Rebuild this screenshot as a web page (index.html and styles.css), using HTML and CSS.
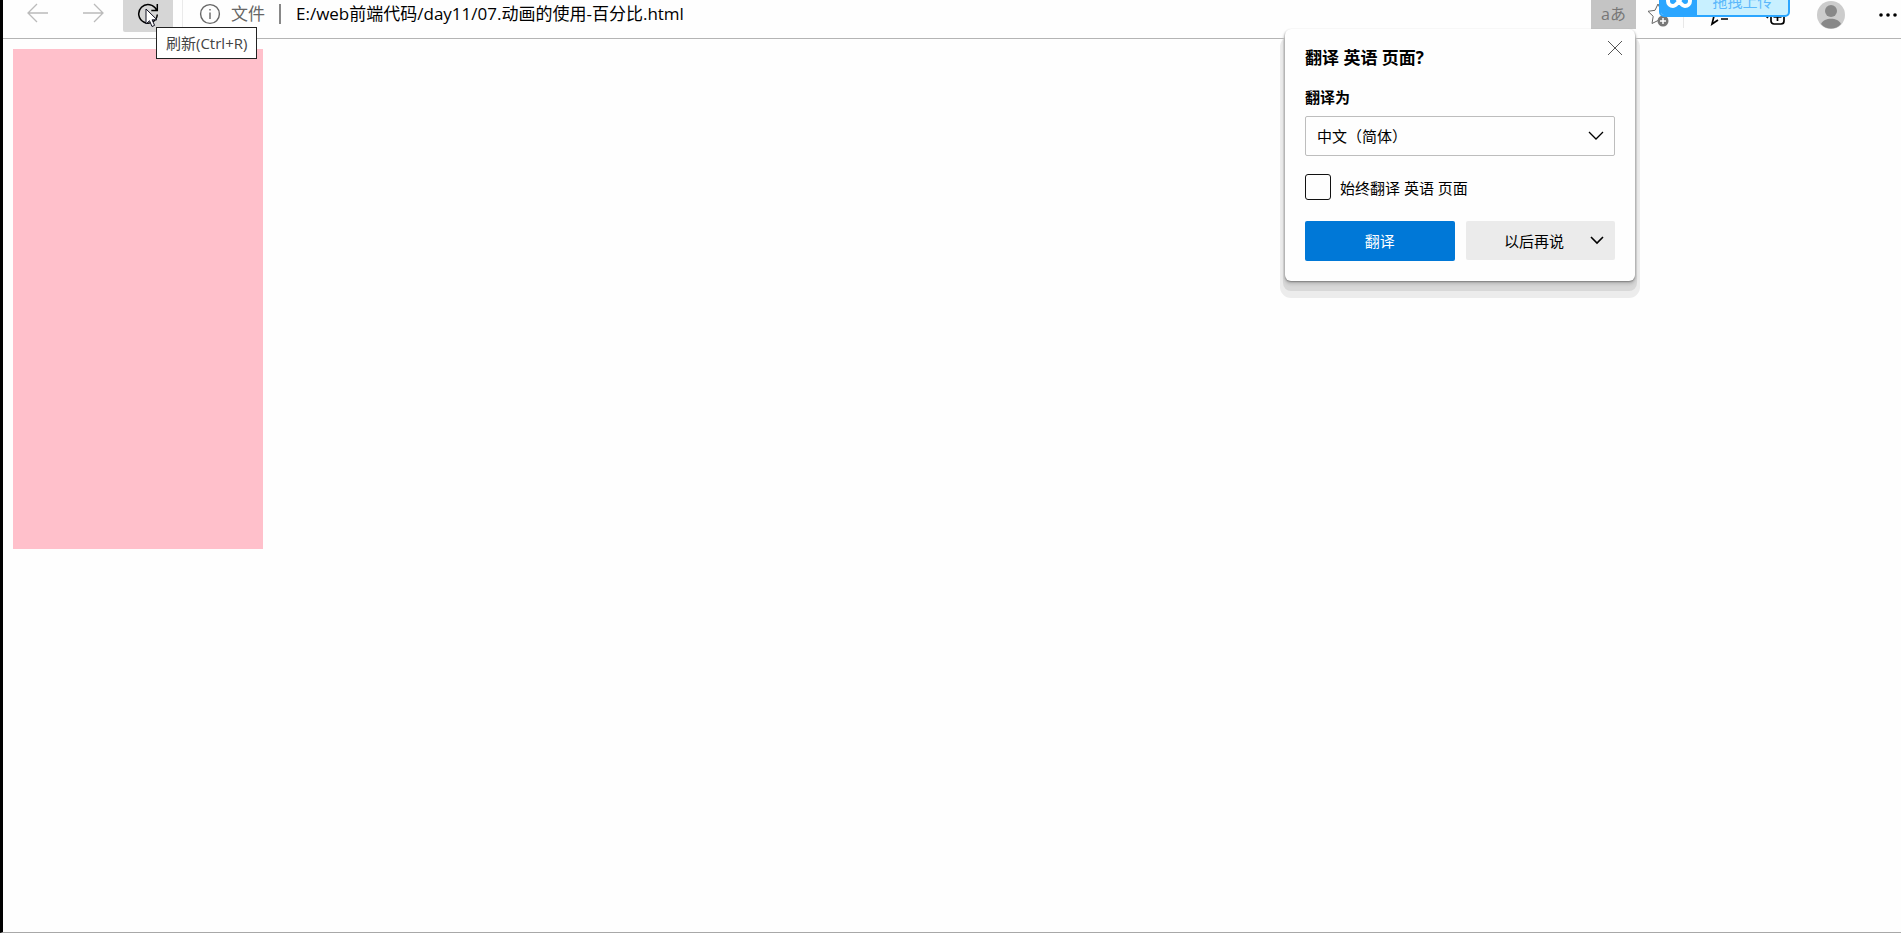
FILE: index.html
```html
<!DOCTYPE html>
<html lang="zh-CN">
<head>
<meta charset="utf-8">
<title>07.动画的使用-百分比.html</title>
<link rel="stylesheet" href="styles.css">
</head>
<body>
<div class="window">
  <header class="toolbar">
    <nav class="nav">
      <button class="nav-btn" type="button" disabled aria-label="后退"><svg width="22" height="22" viewBox="0 0 22 22"><path d="M21 11H1M10 2l-9 9 9 9"/></svg></button>
      <button class="nav-btn" type="button" disabled aria-label="前进"><svg width="22" height="22" viewBox="0 0 22 22"><path d="M0 11h20M11 2l9 9-9 9"/></svg></button>
      <button class="refresh" type="button" aria-label="刷新">
        <svg width="22" height="22" viewBox="0 0 22 22"><path d="M19.500 7A9.300 9.300 0 1 0 20.300 11.500M20.300 1v6.500h-6"/></svg>
      </button>
      <svg class="cursor" width="13" height="20" viewBox="0 0 13 20"><path d="M1 1v15l3.500-3.300L7 18.500l2.600-1.100-2.500-5.600H12z"/></svg>
      <span class="tooltip" role="tooltip">刷新(Ctrl+R)</span>
    </nav>
    <div class="address">
      <svg class="info" width="22" height="22" viewBox="0 0 22 22"><circle cx="11" cy="11" r="9.400"/><path d="M11 9.500V16M11 6v1.600"/></svg>
      <span class="scheme">文件</span>
      <span class="bar"></span>
      <span class="url">E:/web前端代码/day11/07.动画的使用-百分比.html</span>
    </div>
    <div class="actions">
      <button class="translate-btn" type="button" aria-label="翻译">aあ</button>
      <button class="action star" type="button" aria-label="收藏"><svg width="24" height="24" viewBox="0 0 24 24"><path d="M11 1l3 6.300 7 1-4 4M11 1L8 7.300l-7 1 5.200 5L5 20.500l6-3"/><circle cx="16" cy="18" r="5.500"/><path class="plus" d="M16 15v6M13 18h6"/></svg></button>
      <span class="divider"></span>
      <button class="action fav" type="button" aria-label="收藏夹"><svg width="24" height="24" viewBox="0 0 24 24"><path d="M11 3l3 6h7M4 9h5l2-6M3 9l3 4-2 8 6-4M13 16h7"/></svg></button>
      <button class="action coll" type="button" aria-label="集锦"><svg width="24" height="24" viewBox="0 0 24 24"><rect x="8" y="7" width="13" height="14" rx="3"/><path d="M5 15l-3-3V5a2 2 0 0 1 2-2h11M10.500 14h8M14.500 10v8"/></svg></button>
      <button class="action avatar" type="button" aria-label="用户"><svg width="28" height="28" viewBox="0 0 28 28"><circle class="disc" cx="14" cy="14" r="14"/><circle class="person" cx="14" cy="10" r="6"/><path class="person" d="M4 23c3-7 17-7 20 0-5 6-15 6-20 0z"/></svg></button>
      <button class="action more" type="button" aria-label="更多"><svg width="18" height="4" viewBox="0 0 18 4"><circle cx="2" cy="2" r="1.800"/><circle cx="9" cy="2" r="1.800"/><circle cx="16" cy="2" r="1.800"/></svg></button>
      <button class="upload" type="button">
        <span class="upload-logo"><svg width="26" height="18" viewBox="0 0 26 18"><path d="M13 9c-2-3-3.500-5-6-5a5 5 0 0 0 0 10c2.500 0 4-2 6-5s3.500-5 6-5a5 5 0 0 1 0 10c-2.500 0-4-2-6-5z"/></svg></span>
        <span class="upload-text">拖拽上传</span>
      </button>
    </div>
    <section class="panel" aria-labelledby="panel-title">
      <button class="close" type="button" aria-label="关闭"><svg width="16" height="16" viewBox="0 0 16 16"><path d="M1 1l14 14M15 1L1 15"/></svg></button>
      <h1 class="panel-title" id="panel-title">翻译 英语 页面?</h1>
      <label class="panel-label" for="lang">翻译为</label>
      <div class="select-wrap">
        <select class="select" id="lang"><option>中文（简体）</option></select>
        <svg class="chevron" width="16" height="10" viewBox="0 0 16 10"><path d="M1 1l7 7 7-7"/></svg>
      </div>
      <div class="check-row">
        <input class="check" type="checkbox" id="always">
        <label for="always">始终翻译 英语 页面</label>
      </div>
      <div class="buttons">
        <button class="primary" type="button">翻译</button>
        <button class="secondary" type="button"><span>以后再说</span><svg width="14" height="9" viewBox="0 0 14 9"><path d="M1 1l6 6 6-6"/></svg></button>
      </div>
    </section>
  </header>
  <main class="page"><div class="box"></div></main>
</div>
</body>
</html>
```
FILE: styles.css
```css
* { box-sizing: border-box; }
body {
  margin: 0;
  background: #fefefe;
  color: #000;
  font-family: "Open Sans", "Noto Sans CJK SC", sans-serif;
}
button { padding: 0; border: 0; background: none; font: inherit; color: inherit; }
svg { display: block; fill: none; stroke: currentColor; }
.window {
  min-height: 100vh;
  display: flex;
  flex-direction: column;
  border-left: 3px solid #000;
  border-bottom: 1px solid #a8a8a8;
}
.toolbar {
  position: relative;
  height: 39px;
  display: flex;
  align-items: flex-start;
  border-bottom: 1px solid #b4b4b4;
}
.nav { position: relative; display: flex; padding-left: 8px; border-right: 1px solid #eaeaea; padding-right: 9px; }
.nav-btn { width: 56px; height: 26px; padding-right: 2px; display: grid; place-items: center; color: #bbb; }
.nav-btn svg { stroke-width: 1.300; }
.refresh { width: 50px; height: 32px; padding-bottom: 4px; display: grid; place-items: center; background: #d6d6d6; border-radius: 0 0 2px 2px; }
.refresh svg { stroke-width: 1.500; }
.cursor { position: absolute; left: 142px; top: 8px; fill: #fff; stroke: #112; }
.tooltip {
  position: absolute;
  z-index: 3;
  left: 153px;
  top: 27px;
  padding: 0 9px;
  border: 1px solid #222;
  background: #fff;
  color: #444;
  font-size: 15px;
  line-height: 30px;
  white-space: nowrap;
}
.address { flex: 1; height: 27px; display: flex; align-items: center; padding-left: 16px; white-space: nowrap; font-size: 17px; line-height: 26px; }
.info { color: #666; stroke-width: 1.400; }
.scheme { margin-left: 10px; color: #666; }
.bar { width: 2px; height: 20px; margin: 0 15px 0 14px; background: #888; }
.actions { position: relative; height: 29px; display: flex; align-items: center; }
.translate-btn { width: 45px; height: 29px; padding-bottom: 3px; background: #c4c4c4; color: #777; font-size: 16px; }
.action { display: grid; place-items: center; }
.star { margin-left: 11px; color: #666; }
.star circle { fill: #777; stroke: none; }
.star .plus { stroke: #fff; stroke-width: 1.500; }
.divider { width: 1px; height: 26px; margin-left: 12px; background: #e8e8e8; }
.fav { margin-left: 24px; }
.coll { margin-left: 31px; }
.fav svg, .coll svg { stroke-width: 1.700; }
.avatar { margin-left: 30px; }
.avatar svg, .more svg { stroke: none; }
.disc { fill: #ccc; }
.person { fill: #888; }
.more { margin: 0 4px 0 34px; }
.more svg { fill: #000; }
.upload {
  position: absolute;
  left: 68px;
  bottom: 12px;
  width: 131px;
  height: 32px;
  display: flex;
  overflow: hidden;
  border: 2px solid #2ba6ff;
  border-radius: 5px;
  background: #c8f0ff;
  color: #5bb8fb;
  font-size: 15px;
}
.upload-logo { width: 36px; height: 28px; display: grid; place-items: center; background: #2ba6ff; color: #fff; }
.upload-logo svg { stroke-width: 4; }
.upload-text { flex: 1; line-height: 28px; }
.panel {
  position: absolute;
  z-index: 2;
  top: 29px;
  right: 266px;
  width: 350px;
  padding: 15px 20px 20px;
  border-radius: 6px;
  background: #fefefe;
  box-shadow: 0 1px 2px rgba(0,0,0,.4), 0 3px 3px 1px #c4c4c4, 0 8px 0 2px #d8d8d8, 0 12px 0 5px #ececec;
  font-size: 15px;
}
.close { position: absolute; right: 12px; top: 11px; color: #555; }
.panel-title { margin: 0; font-size: 17px; line-height: 28px; }
.panel-label { display: block; margin: 12px 0 6px; font-weight: 700; line-height: 26px; }
.select-wrap { position: relative; }
.select { width: 100%; height: 40px; padding: 0 11px; border: 1px solid #bdbdbd; border-radius: 2px; background: #fefefe; appearance: none; font: inherit; color: #000; }
.chevron { position: absolute; right: 11px; top: 15px; pointer-events: none; stroke-width: 1.300; }
.check-row { display: flex; align-items: center; gap: 9px; margin: 18px 0 21px; }
.check { width: 26px; height: 26px; margin: 0; appearance: none; border: 1px solid #111; border-radius: 3px; }
.buttons { display: grid; grid-template-columns: 1fr 1fr; gap: 11px; }
.primary { height: 40px; padding-bottom: 2px; border-radius: 2px; background: #0078d7; color: #fff; }
.secondary { height: 39px; display: flex; align-items: center; justify-content: flex-end; gap: 26px; padding-right: 11px; border-radius: 2px; background: #ebebeb; }
.secondary svg { stroke-width: 1.600; }
.page { flex: 1; padding: 10px; }
.box { width: 250px; height: 500px; background: #ffc0cb; }
```
